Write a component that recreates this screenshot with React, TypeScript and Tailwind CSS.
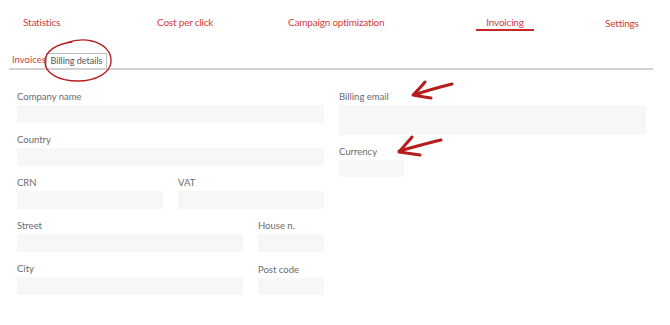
import React from "react";

const font = { fontFamily: "Lato, 'Noto Sans', sans-serif" };

function Field({ label, w, h = "h-[18px]" }: { label: string; w: string; h?: string }) {
  return (
    <div className={`flex flex-col gap-[2px] ${w}`}>
      <div className="text-[9.5px] leading-[12px] text-[#6b6b6b] whitespace-nowrap">{label}</div>
      <div className={`${h} w-full bg-[#f7f7f7]`} />
    </div>
  );
}

export default function App() {
  return (
    <div className="relative w-[670px] h-[325px] bg-white overflow-hidden" style={font}>
      {/* Top nav */}
      <div className="flex items-start pt-[16px] h-[31px] text-[10px] tracking-[-0.2px] leading-[12px] text-[#cf3e3e] whitespace-nowrap">
        <div className="w-[134px] ml-[23px]">Statistics</div>
        <div className="w-[131px]">Cost per click</div>
        <div className="w-[188px]">Campaign optimization</div>
        <div className="w-[58px] h-[15px] border-b-2 border-[#c62828] text-center">Invoicing</div>
        <div className="pl-[71px] pt-[1px]">Settings</div>
      </div>

      {/* Sub tabs */}
      <div className="ml-[9px] w-[644px] mt-[22px] flex items-end border-b-2 border-[#d2d2d2] leading-[12px] whitespace-nowrap">
        <div className="pl-[3px] pb-[2px] text-[#cf3e3e] w-[37px] text-[9.5px]">Invoices</div>
        <div className="h-[15px] w-[61px] border border-b-0 border-[#bdbdbd] text-center text-[#555] text-[9px] leading-[14px]">
          Billing details
        </div>
      </div>

      {/* Form */}
      <div className="flex gap-[15px] pl-[17px] pt-[21px]">
        <div className="w-[307px] flex flex-col gap-[11px]">
          <Field label="Company name" w="w-full" />
          <Field label="Country" w="w-full" />
          <div className="flex gap-[15px]">
            <Field label="CRN" w="w-[146px]" />
            <Field label="VAT" w="w-[146px]" />
          </div>
          <div className="flex gap-[15px]">
            <Field label="Street" w="w-[226px]" />
            <Field label="House n." w="w-[66px]" />
          </div>
          <div className="flex gap-[15px]">
            <Field label="City" w="w-[226px]" />
            <div className="mt-[1px] w-[66px]">
              <Field label="Post code" w="w-[66px]" h="h-[17px]" />
            </div>
          </div>
        </div>
        <div className="w-[307px] flex flex-col gap-[11px]">
          <Field label="Billing email" w="w-full" h="h-[30px]" />
          <Field label="Currency" w="w-[65px]" h="h-[17px]" />
        </div>
      </div>

      {/* Annotations */}
      <svg className="absolute left-0 top-0 pointer-events-none" width="670" height="325" viewBox="0 0 670 325">
        <path
          d="M66 43 C 74 40, 84 39, 92 41 C 104 44, 112 52, 111 62 C 110 73, 96 81, 78 81 C 58 81, 45 73, 45 62 C 45 51, 56 44, 72 42"
          fill="none"
          stroke="#b51f1f"
          strokeWidth="1.4"
          strokeLinecap="round"
        />
        <path
          d="M452 84 C 440 87, 428 90, 414 95 M425 82 C 421 87, 417 91, 413 95 C 418 96, 424 97, 431 98"
          fill="none"
          stroke="#b71c1c"
          strokeWidth="3"
          strokeLinecap="round"
          strokeLinejoin="round"
        />
        <path
          d="M441 140 C 428 143, 414 147, 399 151 M412 137 C 408 142, 403 147, 399 152 C 406 153, 413 154, 420 155"
          fill="none"
          stroke="#b71c1c"
          strokeWidth="3"
          strokeLinecap="round"
          strokeLinejoin="round"
        />
      </svg>
    </div>
  );
}
